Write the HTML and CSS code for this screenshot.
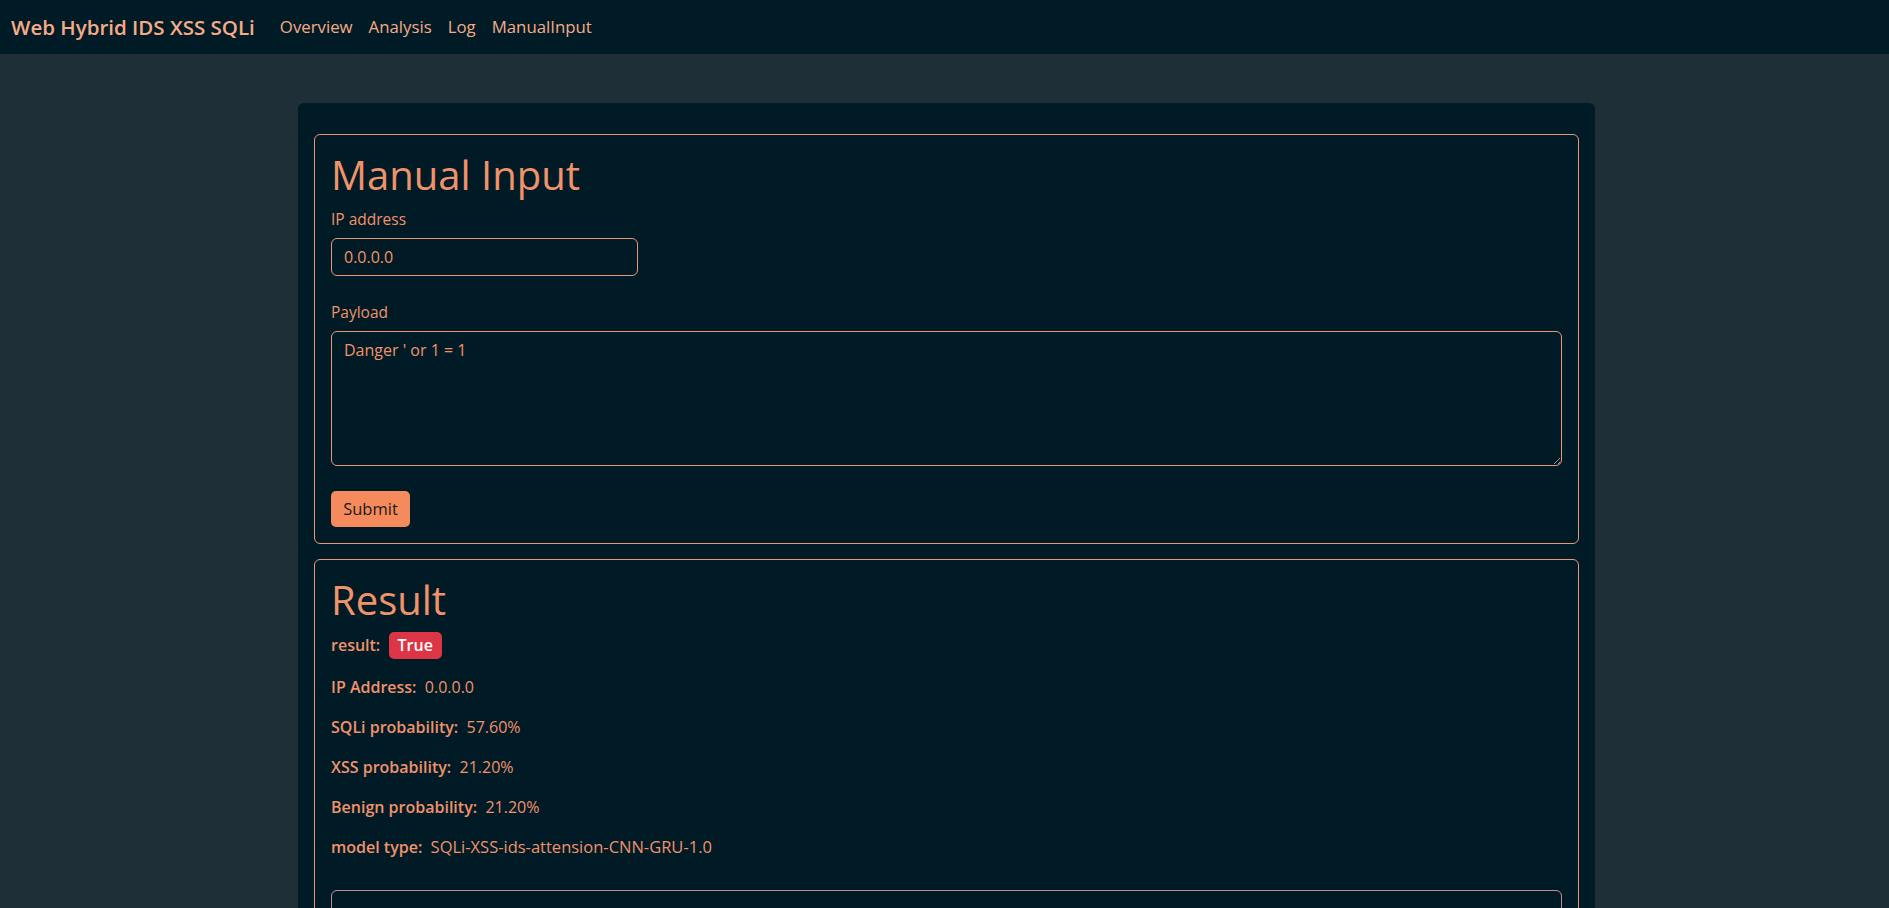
FILE: index.html
```html
<!DOCTYPE html>
<html lang="en">
<head>
<meta charset="utf-8">
<title>Web Hybrid IDS XSS SQLi</title>
<link rel="stylesheet" href="styles.css">
</head>
<body>
<nav class="navbar">
  <a class="brand" href="#">Web Hybrid IDS XSS SQLi</a>
  <ul class="nav-links">
    <li><a href="#">Overview</a></li>
    <li><a href="#">Analysis</a></li>
    <li><a href="#">Log</a></li>
    <li><a href="#">ManualInput</a></li>
  </ul>
</nav>
<main class="container">
  <section class="card">
    <h1 class="card-title">Manual Input</h1>
    <label class="field-label" for="ip">IP address</label>
    <input class="field-input" id="ip" type="text" value="0.0.0.0">
    <label class="field-label" for="payload">Payload</label>
    <textarea class="field-textarea" id="payload">Danger ' or 1 = 1</textarea>
    <button class="btn-submit" type="button">Submit</button>
  </section>
  <section class="card">
    <h1 class="card-title">Result</h1>
    <p class="row row-badge"><span class="key">result:</span>&nbsp; <span class="badge">True</span></p>
    <p class="row"><span class="key">IP Address:</span>&nbsp; 0.0.0.0</p>
    <p class="row"><span class="key">SQLi probability:</span>&nbsp; 57.60%</p>
    <p class="row"><span class="key">XSS probability:</span>&nbsp; 21.20%</p>
    <p class="row"><span class="key">Benign probability:</span>&nbsp; 21.20%</p>
    <p class="row"><span class="key">model type:</span>&nbsp; <span class="val">SQLi-XSS-ids-attension-CNN-GRU-1.0</span></p>
    <div class="extra-box"></div>
  </section>
</main>
</body>
</html>
```
FILE: styles.css
```css
* { box-sizing: border-box; }
html, body { margin: 0; padding: 0; }
body {
  background: #1f2f38;
  font-family: "Open Sans", "Noto Sans", sans-serif;
  font-size: 16px;
  line-height: 1.5;
  color: #f0926a;
}
.navbar {
  height: 54px;
  background: #011b26;
  display: flex;
  align-items: center;
  padding: 0 11px;
}
.brand {
  color: #f6ab86;
  font-size: 20.5px;
  font-weight: 600;
  text-decoration: none;
  margin-right: 17px;
}
.nav-links {
  display: flex;
  list-style: none;
  margin: 0;
  padding: 0;
}
.nav-links a {
  display: block;
  padding: 0 8px;
  color: #f6ab86;
  text-decoration: none;
  font-size: 16.8px;
}
.container {
  width: 1297px;
  margin: 49px auto 0;
  position: relative;
  left: 2px;
  background: #011b26;
  border-radius: 6px;
  padding: 16px 16px 1px;
  display: flow-root;
}
.card {
  border: 1px solid #e59a75;
  border-radius: 6px;
  margin: 15px 0 15px;
  padding: 16px;
}
.card + .card { margin-top: 0; }
.card-title {
  margin: 0 0 8px;
  font-size: 40px;
  font-weight: 400;
  line-height: 48px;
  color: #f0926a;
}
.field-label {
  display: block;
  font-size: 15.5px;
  line-height: 24px;
  margin-bottom: 7px;
}
.field-input {
  display: block;
  width: 307px;
  height: 38px;
  border: 1px solid #e59a75;
  border-radius: 6px;
  background: #011b26;
  color: #f0926a;
  font: inherit;
  font-size: 16px;
  padding: 6px 12px;
  margin-bottom: 24px;
}
.field-textarea {
  display: block;
  width: 100%;
  height: 135px;
  border: 1px solid #e59a75;
  border-radius: 6px;
  background: #011b26;
  color: #f0926a;
  font: inherit;
  font-size: 16px;
  padding: 6px 12px;
  margin-bottom: 25px;
  resize: vertical;
}
.btn-submit {
  display: block;
  width: 79px;
  height: 36px;
  border: 0;
  border-radius: 5px;
  background: #f58b5d;
  color: #1a1a1a;
  font: inherit;
  font-size: 16.5px;
  padding: 0;
}
.row {
  margin: 0 0 16px;
  font-size: 16px;
  line-height: 24px;
}
.row-badge { line-height: 26px; }
.key { font-weight: 600; }
.val { font-size: 16.5px; }
.badge {
  display: inline-block;
  background: #dc3545;
  color: #fff;
  font-weight: 600;
  font-size: 16px;
  line-height: 19px;
  padding: 4px 9px;
  border-radius: 5px;
}
.extra-box {
  margin-top: 31px;
  height: 120px;
  border: 1px solid #c98a95;
  border-radius: 6px;
}
```
